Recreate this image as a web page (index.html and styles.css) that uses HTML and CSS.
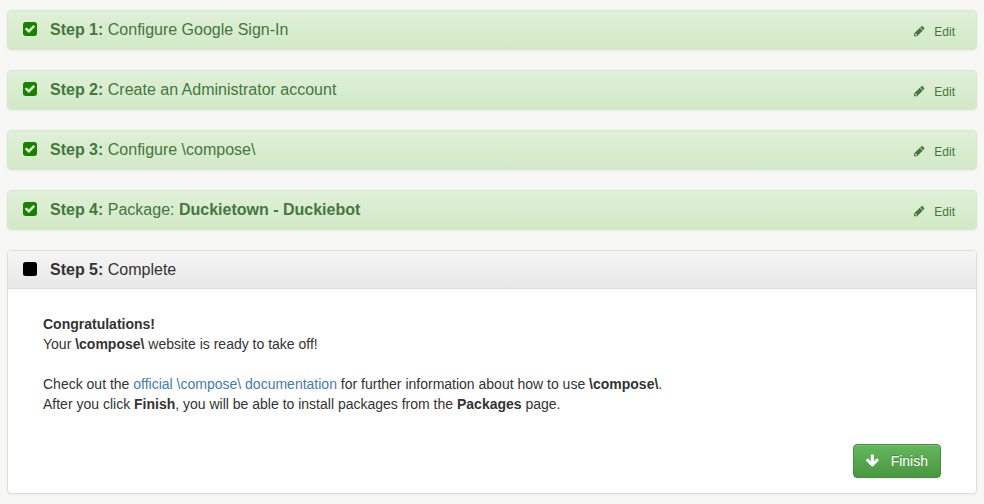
FILE: index.html
```html
<!DOCTYPE html>
<html lang="en">
<head>
<meta charset="utf-8">
<title>Setup</title>
<link rel="stylesheet" href="styles.css">
</head>
<body>
<svg class="defs" aria-hidden="true">
  <symbol id="check" viewBox="0 0 1536 1536"><path d="M685 1171l614-614q19-19 19-45t-19-45l-102-102q-19-19-45-19t-45 19l-467 467-211-211q-19-19-45-19t-45 19l-102 102q-19 19-19 45t19 45l358 358q19 19 45 19t45-19zm851-883v960q0 119-84.500 203.500t-203.500 84.500h-960q-119 0-203.500-84.500t-84.500-203.500v-960q0-119 84.500-203.500t203.500-84.500h960q119 0 203.500 84.500t84.500 203.500z"/></symbol>
  <symbol id="pencil" viewBox="128 149 1515 1515"><path d="M491 1536l91-91-235-235-91 91v107h128v128h107zM960 416l416 416-832 832h-416v-416zm683 96q0 53-37 90l-166 166-416-416 166-165q36-38 90-38 53 0 91 38l235 234q37 39 37 91z"/></symbol>
</svg>
<main class="steps">
  <section class="panel done">
    <header class="heading"><svg class="state"><use href="#check"/></svg><h4 class="title"><b>Step 1:</b> Configure Google Sign-In</h4><a class="edit"><svg class="pencil"><use href="#pencil"/></svg>Edit</a></header>
  </section>
  <section class="panel done">
    <header class="heading"><svg class="state"><use href="#check"/></svg><h4 class="title"><b>Step 2:</b> Create an Administrator account</h4><a class="edit"><svg class="pencil"><use href="#pencil"/></svg>Edit</a></header>
  </section>
  <section class="panel done">
    <header class="heading"><svg class="state"><use href="#check"/></svg><h4 class="title"><b>Step 3:</b> Configure \compose\</h4><a class="edit"><svg class="pencil"><use href="#pencil"/></svg>Edit</a></header>
  </section>
  <section class="panel done">
    <header class="heading"><svg class="state"><use href="#check"/></svg><h4 class="title"><b>Step 4:</b> Package: <b>Duckietown - Duckiebot</b></h4><a class="edit"><svg class="pencil"><use href="#pencil"/></svg>Edit</a></header>
  </section>
  <section class="panel current">
    <header class="heading"><span class="state square"></span><h4 class="title"><b>Step 5:</b> Complete</h4></header>
    <div class="content">
      <p><b>Congratulations!</b><br>Your <b>\compose\</b> website is ready to take off!</p>
      <p>Check out the <a class="link">official \compose\ documentation</a> for further information about how to use <b>\compose\</b>.<br>After you click <b>Finish</b>, you will be able to install packages from the <b>Packages</b> page.</p>
      <button class="finish" type="button"><svg class="arrow" viewBox="117 90 1558 1558"><path d="M1675 832q0 53-37 90l-651 652q-39 37-91 37-53 0-90-37l-651-652q-38-36-38-90 0-53 38-91l74-75q39-37 91-37 53 0 90 37l294 294v-704q0-52 38-90t90-38h128q52 0 90 38t38 90v704l294-294q37-37 90-37 52 0 91 37l75 75q37 39 37 91z"/></svg>Finish</button>
    </div>
  </section>
</main>
</body>
</html>
```
FILE: styles.css
```css
* { box-sizing: border-box; }
body {
  margin: 0;
  background: #f7f7f5;
  color: #333;
  font: 14px/20px "Liberation Sans", Arial, sans-serif;
}
.defs { display: none; }
.steps {
  display: flex;
  flex-direction: column;
  gap: 20px;
  padding: 10px 7px;
}
.panel {
  border: 1px solid #ddd;
  border-radius: 4px;
  background: #fff;
  box-shadow: 0 1px 2px rgba(0, 0, 0, .05);
}
.heading {
  display: flex;
  align-items: center;
  height: 38px;
  padding: 0 21px 0 15px;
  border-radius: 3px 3px 0 0;
  background: linear-gradient(#f5f5f5, #e8e8e8);
}
.current .heading { border-bottom: 1px solid #ddd; }
.done { border-color: #d6e9c6; }
.done .heading {
  border-radius: 3px;
  background: linear-gradient(#dff0d8, #d2e9c6);
  color: #44773f;
}
.state {
  width: 14px;
  height: 14px;
  margin: 0 13px 2px 0;
  fill: #1a8000;
}
.square { margin-bottom: 1px; border-radius: 2.500px; background: #000; }
.title {
  margin: 0;
  font-size: 16px;
  font-weight: 400;
  line-height: 18px;
}
.edit {
  display: flex;
  align-items: center;
  margin-left: auto;
  padding-top: 4px;
  font-size: 12px;
  line-height: 17px;
}
.pencil {
  width: 10.500px;
  height: 10.500px;
  margin: 0 9.500px 1px 0;
  fill: currentColor;
}
.content {
  display: flex;
  flex-direction: column;
  height: 204px;
  padding: 25px 35px 15px;
}
.content p { margin: 0 0 20px; }
.link { color: #427cb6; }
.finish {
  display: flex;
  align-items: center;
  align-self: flex-end;
  width: 88px;
  height: 34px;
  margin-top: auto;
  padding: 0 12px;
  border: 1px solid #468f3e;
  border-radius: 4px;
  background: linear-gradient(#64b75c, #4a9641);
  box-shadow: inset 0 1px 0 rgba(255, 255, 255, .15), 0 1px 1px rgba(0, 0, 0, .075);
  color: #fff;
  font: 14px/20px "Liberation Sans", Arial, sans-serif;
  text-shadow: 0 -1px 0 rgba(0, 0, 0, .2);
}
.arrow {
  width: 13px;
  height: 13px;
  margin: 0 12px 1px 0;
  fill: #fff;
}
```
